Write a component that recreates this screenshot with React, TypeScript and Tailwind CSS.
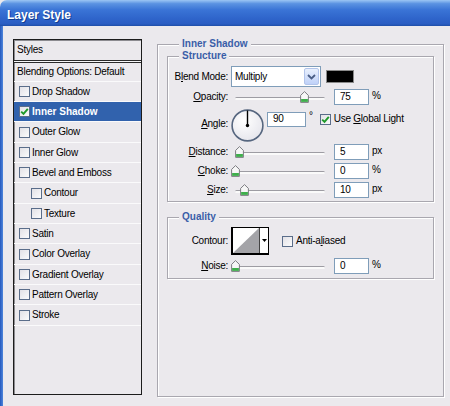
import React from 'react';

/* ============================================================
   Layer Style — Photoshop "Inner Shadow" dialog, XP chrome
   ============================================================ */

type StyleItem = { label: string; checked?: boolean; selected?: boolean; indent?: boolean };

const styleItems: StyleItem[] = [
  { label: 'Drop Shadow' },
  { label: 'Inner Shadow', checked: true, selected: true },
  { label: 'Outer Glow' },
  { label: 'Inner Glow' },
  { label: 'Bevel and Emboss' },
  { label: 'Contour', indent: true },
  { label: 'Texture', indent: true },
  { label: 'Satin' },
  { label: 'Color Overlay' },
  { label: 'Gradient Overlay' },
  { label: 'Pattern Overlay' },
  { label: 'Stroke' },
];

// rows are ~20.33px apart, so every third one gets the extra pixel
const rowHeights = ['h-[20px]', 'h-[20px]', 'h-[21px]'];

function Check({ checked = false, className = '' }: { checked?: boolean; className?: string }) {
  return (
    <span
      className={`flex h-[11px] w-[11px] flex-shrink-0 items-center justify-center border border-[#5a6d8a] bg-[linear-gradient(135deg,#e2e1e6,#fbfbfc)] ${className}`}
    >
      {checked && (
        <svg width="9" height="9" viewBox="0 0 9 9">
          <path d="M1.2 4.6 L3.5 6.9 L7.8 1.8" fill="none" stroke="#1f9a2a" strokeWidth="1.9" />
        </svg>
      )}
    </span>
  );
}

// underlined access key, like the Windows dialogs do it
function Key({ text, at }: { text: string; at: number }) {
  return (
    <>
      {text.slice(0, at)}
      <span className="underline underline-offset-[1px]">{text[at]}</span>
      {text.slice(at + 1)}
    </>
  );
}

function Field({ value }: { value: string }) {
  return (
    <div className="flex h-[16px] w-[35px] items-center border border-[#7f9db9] bg-white pl-[5px]">{value}</div>
  );
}

function Slider({ pos }: { pos: number }) {
  return (
    <div className="relative h-[16px] w-[105px]">
      <div className="absolute left-[6px] top-[8px] h-[3px] w-[90px] rounded-full border-t border-[#9d9ca3] bg-[#fafafa]" />
      <svg
        width="9"
        height="12"
        viewBox="0 0 9 12"
        className="absolute top-[2px]"
        style={{ left: pos - 4.5 }}
      >
        <path d="M4.5 0.6 L8.4 4.4 V11.4 H0.6 V4.4 Z" fill="#f7f7f7" stroke="#7d7d82" strokeWidth="1" />
        <rect x="1.1" y="8" width="6.8" height="2.9" fill="#3fae4c" />
      </svg>
    </div>
  );
}

function Label({ children }: { children: React.ReactNode }) {
  return <div className="w-[61px] flex-shrink-0 pr-[1px] text-right">{children}</div>;
}

function SliderRow({
  label,
  pos,
  value,
  unit,
  className = '',
}: {
  label: React.ReactNode;
  pos: number;
  value: string;
  unit: string;
  className?: string;
}) {
  return (
    <div className={`flex h-[16px] items-center ${className}`}>
      <Label>{label}</Label>
      <Slider pos={pos} />
      <Field value={value} />
      <span className="ml-[3px] -mt-[2px]">{unit}</span>
    </div>
  );
}

function GroupBox({
  title,
  className = '',
  legendClass = '',
  children,
}: {
  title: string;
  className?: string;
  legendClass?: string;
  children: React.ReactNode;
}) {
  return (
    <fieldset
      className={`border border-[#a9a7af] shadow-[inset_1px_1px_0_#ffffff,1px_1px_0_#ffffff] ${className}`}
    >
      <legend
        className={`bg-[#ebe9ed] px-[3px] text-[10px] font-bold leading-[12px] tracking-normal text-[#3a5ea8] ${legendClass}`}
      >
        {title}
      </legend>
      {children}
    </fieldset>
  );
}

function StylesList() {
  return (
    <div className="flex h-[356px] w-[129px] flex-shrink-0 flex-col border border-[#1c1c1c] bg-[#ebe9ed] shadow-[inset_1px_1px_0_#8c8b90]">
      <div className="flex h-[21px] items-center border-b border-[#2a2a2a] pl-[3px]">Styles</div>
      <div className="h-[1px] bg-[#f7f7f9]" />
      <div className="flex h-[20px] items-center border-y border-t-[#2a2a2a] border-b-[#fafafb] pl-[3px]">
        Blending Options: Default
      </div>
      {styleItems.map((item, i) => (
        <div
          key={item.label}
          className={`flex ${rowHeights[i % 3]} items-center gap-[2px] border-b border-[#fafafb] ${
            item.indent ? 'pl-[17px]' : 'pl-[5px]'
          } ${item.selected ? 'bg-[#3162ad] font-bold tracking-normal text-white' : ''}`}
        >
          <Check checked={item.checked} />
          <span>{item.label}</span>
        </div>
      ))}
    </div>
  );
}

function InnerShadowPanel() {
  return (
    <GroupBox title="Inner Shadow" className="-mt-[1px] h-[359px] w-[287px] px-[9px]" legendClass="ml-[12px]">
      <GroupBox title="Structure" className="pb-[3px]" legendClass="ml-[11px]">
        {/* Blend mode */}
        <div className="mt-[4px] flex h-[21px] items-center">
          <Label>
            <Key text="Blend Mode:" at={1} />
          </Label>
          <div className="ml-[2px] flex h-[21px] w-[90px] items-center border border-[#7f9db9] bg-white">
            <span className="flex-1 pl-[3px]">Multiply</span>
            <div className="mr-[1px] flex h-[17px] w-[15px] items-center justify-center rounded-[2px] border border-[#b2c4ea] bg-[linear-gradient(#e9f0fd,#bfd1f8)]">
              <svg width="9" height="6" viewBox="0 0 9 6">
                <path d="M1 1 L4.5 4.5 L8 1" fill="none" stroke="#4a5e86" strokeWidth="1.8" />
              </svg>
            </div>
          </div>
          <div className="ml-[5px] h-[13px] w-[28px] border border-[#8a8a8a] bg-black" />
        </div>

        <SliderRow className="mt-[2px]" label={<Key text="Opacity:" at={0} />} pos={75} value="75" unit="%" />

        {/* Angle */}
        <div className="mt-[3px] flex h-[34px] items-start">
          <div className="mt-[10px] w-[61px] flex-shrink-0 pr-[1px] text-right">
            <Key text="Angle:" at={0} />
          </div>
          <svg width="33" height="33" viewBox="0 0 33 33" className="ml-[2px] mt-[1px]">
            <defs>
              <radialGradient id="dial" cx="40%" cy="35%" r="75%">
                <stop offset="0" stopColor="#ffffff" />
                <stop offset="1" stopColor="#e3e3ea" />
              </radialGradient>
            </defs>
            <circle cx="16.5" cy="16.5" r="15.4" fill="url(#dial)" stroke="#56667f" strokeWidth="1.6" />
            <line x1="16.5" y1="16.5" x2="16.5" y2="1.5" stroke="#000" strokeWidth="1.4" />
            <circle cx="16.5" cy="16.5" r="1.7" fill="#000" />
          </svg>
          <div className="mt-[3px] flex h-[16px] items-center">
            <div className="ml-[3px] flex h-[15px] w-[39px] items-center border border-[#7f9db9] bg-white pl-[5px]">90</div>
            <span className="ml-[3px] -mt-[6px]">°</span>
            <Check checked className="ml-[7px] border-[#3e5a80] bg-white" />
            <span className="ml-[3px]">
              Use <Key text="Global Light" at={0} />
            </span>
          </div>
        </div>

        <SliderRow className="mt-[2px]" label={<Key text="Distance:" at={0} />} pos={10.5} value="5" unit="px" />
        <SliderRow className="mt-[3px]" label={<Key text="Choke:" at={0} />} pos={6.5} value="0" unit="%" />
        <SliderRow className="mt-[3px]" label={<Key text="Size:" at={0} />} pos={15} value="10" unit="px" />
      </GroupBox>

      <GroupBox title="Quality" className="mt-[9px] pb-[4px]" legendClass="ml-[11px]">
        <div className="mt-[4px] flex h-[28px] items-center">
          <Label>Contour:</Label>
          <div className="ml-[2px] flex h-[28px] w-[38px] border border-black border-b-[2px] border-l-[2px] bg-white">
            <svg width="26" height="25" viewBox="0 0 26 25" className="flex-shrink-0">
              <polygon points="0,25 26,0 26,25" fill="#a4a4a8" />
            </svg>
            <div className="flex flex-1 items-center justify-center border-l border-[#444]">
              <svg width="5" height="3" viewBox="0 0 5 3">
                <polygon points="0,0 5,0 2.5,3" fill="#000" />
              </svg>
            </div>
          </div>
          <Check className="ml-[13px] border-[#3e5a80] bg-white" />
          <span className="ml-[3px]">
            <Key text="Anti-aliased" at={6} />
          </span>
        </div>
        <SliderRow className="mt-[3px]" label={<Key text="Noise:" at={0} />} pos={6} value="0" unit="%" />
      </GroupBox>
    </GroupBox>
  );
}

export default function App() {
  return (
    <div className="flex h-[406px] w-[450px] flex-col overflow-hidden bg-[#ebe9ed] font-['Liberation_Sans',Arial,sans-serif] text-[10px] leading-[12px] tracking-[-0.25px] text-black">
      {/* Title bar */}
      <div className="flex h-[26px] flex-shrink-0 items-center rounded-tl-[7px] bg-[linear-gradient(to_bottom,#9cc6f4_0%,#5b93e2_14%,#3a74d6_38%,#2f65cb_70%,#2a5dc2_92%,#1e4ea8_100%)] pl-[7px] pt-[3px]">
        <span className="text-[12px] font-bold tracking-normal text-white [text-shadow:1px_1px_0_#123d8f]">
          Layer Style
        </span>
      </div>

      {/* Body */}
      <div className="flex flex-1">
        <div className="w-[3px] flex-shrink-0 bg-[linear-gradient(to_right,#2458bd,#4f86dc)]" />
        <div className="flex flex-1 items-start gap-[15px] pl-[10px] pt-[13px]">
          <StylesList />
          <InnerShadowPanel />
        </div>
      </div>
    </div>
  );
}
